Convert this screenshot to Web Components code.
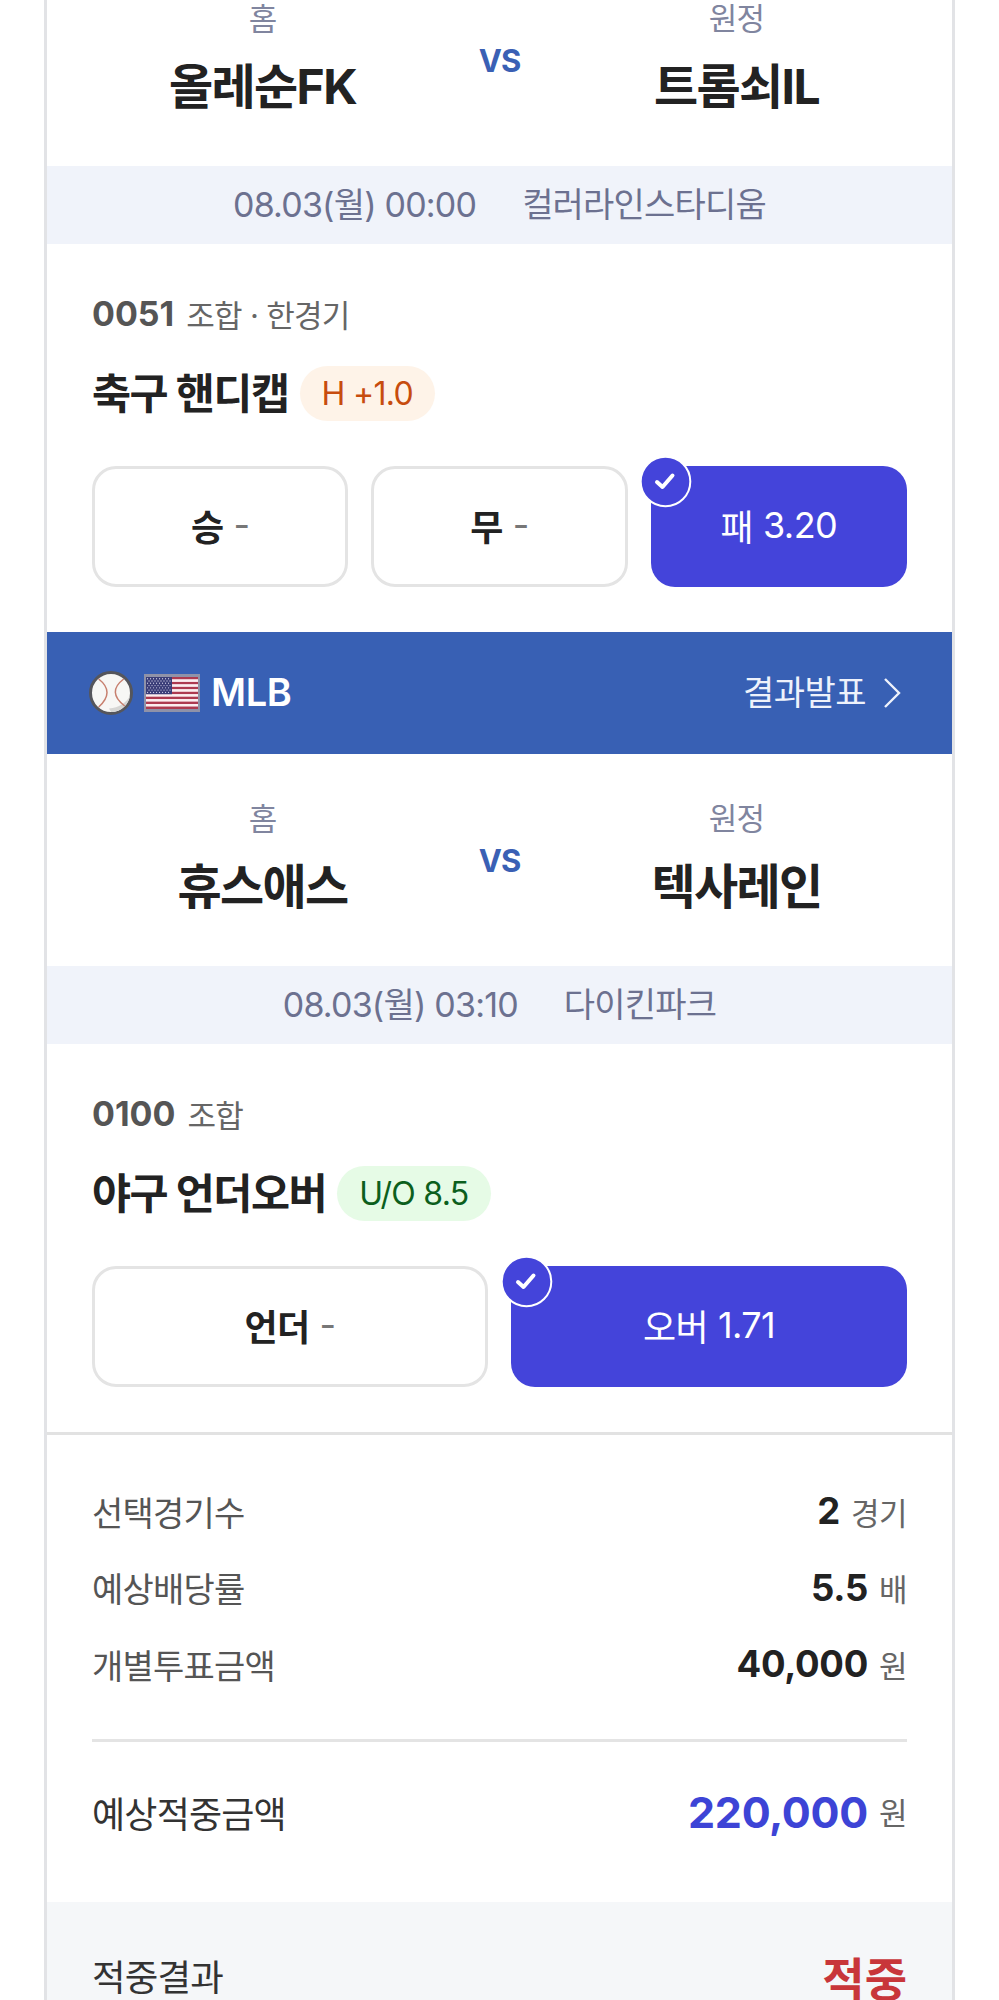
<!DOCTYPE html>
<html lang="ko"><head><meta charset="utf-8"><title>투표 내역</title>
<style>
html,body{margin:0;padding:0;background:#fff;}
body{font-family:Inter,"Noto Sans CJK KR",sans-serif;color:#222;height:2000px;overflow:hidden;}
</style></head><body>
<bet-card>
  <match-up home="올레순FK" away="트롬쇠IL"></match-up>
  <info-band time="08.03(월) 00:00" place="컬러라인스타디움"></info-band>
  <bet-market code="0051" kind="조합 · 한경기" title="축구 핸디캡" tag="H +1.0" tone="orange">
    <bet-option label="승"></bet-option>
    <bet-option label="무"></bet-option>
    <bet-option label="패" odds="3.20" selected></bet-option>
  </bet-market>
  <league-bar name="MLB" action="결과발표"></league-bar>
  <match-up home="휴스애스" away="텍사레인"></match-up>
  <info-band time="08.03(월) 03:10" place="다이킨파크"></info-band>
  <bet-market code="0100" kind="조합" title="야구 언더오버" tag="U/O 8.5" tone="green">
    <bet-option label="언더"></bet-option>
    <bet-option label="오버" odds="1.71" selected></bet-option>
  </bet-market>
  <bet-summary>
    <summary-row label="선택경기수" value="2" unit="경기"></summary-row>
    <summary-row label="예상배당률" value="5.5" unit="배"></summary-row>
    <summary-row label="개별투표금액" value="40,000" unit="원"></summary-row>
    <summary-row slot="total" total label="예상적중금액" value="220,000" unit="원"></summary-row>
  </bet-summary>
  <bet-result label="적중결과" value="적중"></bet-result>
</bet-card>
<script>
const FONT='Inter,"Noto Sans CJK KR",sans-serif';
function def(name,render){
  customElements.define(name,class extends HTMLElement{
    connectedCallback(){
      if(this.shadowRoot)return;
      const s=this.attachShadow({mode:'open'});
      s.innerHTML=render(this);
    }
  });
}
def('bet-card',()=>`<style>:host{display:block;box-sizing:border-box;width:911px;margin:-46px 0 0 44px;border-left:3px solid #e2e3e6;border-right:3px solid #e2e3e6;background:#fff;font-family:${FONT};}</style><slot></slot>`);
def('match-up',e=>`<style>
:host{display:grid;grid-template-columns:1fr auto 1fr;height:212px;box-sizing:border-box;padding-top:46px;text-align:center;}
.s{display:block;font-size:31px;line-height:38px;color:#80859f;letter-spacing:-.8px;font-weight:400;}
.n{display:block;margin-top:19px;font-size:48px;line-height:60px;font-weight:700;color:#222;letter-spacing:-1.6px;}
.v{font-size:31px;line-height:38px;font-weight:700;color:#3a60b4;margin-top:42px;letter-spacing:-1px;width:43px;}
</style><div><span class="s">홈</span><span class="n">${e.getAttribute('home')}</span></div><div class="v">VS</div><div><span class="s">원정</span><span class="n">${e.getAttribute('away')}</span></div>`);
def('info-band',e=>`<style>
:host{display:flex;justify-content:center;align-items:center;gap:46px;box-sizing:border-box;padding-bottom:5px;height:78px;background:#f0f3fa;color:#6c7190;font-size:34px;letter-spacing:-.8px;}
</style><span>${e.getAttribute('time')}</span><span>${e.getAttribute('place')}</span>`);
def('bet-market',e=>`<style>
:host{display:block;padding:49px 45px 45px;}
.m{display:flex;align-items:center;height:40px;gap:12px;font-size:31px;color:#666;letter-spacing:-.7px;}
.m b{font-size:34px;font-weight:700;color:#555;letter-spacing:0;}
.t{display:flex;align-items:center;gap:11px;margin-top:32px;height:56px;font-size:42.5px;font-weight:700;color:#222;letter-spacing:-1.5px;}
.t>span:first-child{margin-bottom:6px;}
.p{display:inline-flex;align-items:center;height:55px;padding:0 22px;border-radius:28px;font-size:32px;font-weight:400;letter-spacing:-.7px;}
.orange{background:#fef3e8;color:#c74c0e;}
.green{background:#e6fbe6;color:#0c5f1d;}
.o{display:flex;gap:23px;margin-top:45px;}
::slotted(bet-option){flex:1 1 0;}
</style><div class="m"><b>${e.getAttribute('code')}</b><span>${e.getAttribute('kind')}</span></div>
<div class="t"><span>${e.getAttribute('title')}</span><span class="p ${e.getAttribute('tone')}">${e.getAttribute('tag')}</span></div>
<div class="o"><slot></slot></div>`);
def('bet-option',e=>{
  const sel=e.hasAttribute('selected');
  return `<style>
:host{display:block;position:relative;min-width:0;}
.b{box-sizing:border-box;height:121px;padding-bottom:3px;border-radius:24px;display:flex;align-items:center;justify-content:center;gap:10px;font-size:36px;letter-spacing:-.6px;}
.off{border:3px solid #e4e4e4;background:#fff;color:#222;font-weight:700;}
.off i{font-style:normal;font-weight:400;color:#777;}
.on{background:#4444da;color:#fff;font-weight:400;}
.c{position:absolute;left:-11.500px;top:-11.500px;width:53px;height:53px;}
</style>${sel?`<div class="b on"><span>${e.getAttribute('label')}</span><span>${e.getAttribute('odds')}</span></div><svg class="c" viewBox="0 0 53 53"><circle cx="26.500" cy="26.500" r="24.800" fill="#4444da" stroke="#fff" stroke-width="2"/><path d="M18 27l5.500 5L33.500 20.500" fill="none" stroke="#fff" stroke-width="4" stroke-linecap="round" stroke-linejoin="round"/></svg>`:`<div class="b off"><span>${e.getAttribute('label')}</span><i>-</i></div>`}`;
});
def('league-bar',e=>{
  let stripes='';
  for(let i=0;i<13;i++){stripes+=`<rect x="0" y="${i*2}" width="52" height="2" fill="${i%2?'#fbeef0':'#ad3a50'}"/>`;}
  let stars='';
  for(let y=0;y<7;y++)for(let x=0;x<8;x++){stars+=`<circle cx="${1.6+x*3+(y%2?1.4:0)}" cy="${1.4+y*1.85}" r=".55" fill="#d8d8ec"/>`;}
  return `<style>
:host{display:flex;align-items:center;height:122px;padding:0 45px 0 42px;background:#3860b4;color:#fff;}
.ball{width:44px;height:44px;flex:none;}
.flag{width:56px;height:38px;flex:none;margin-left:11px;}
.n{margin-left:11px;padding-bottom:2px;font-size:38px;font-weight:600;letter-spacing:-.4px;}
.a{margin-left:auto;padding-bottom:5px;font-size:34px;letter-spacing:-.5px;color:#eef2fb;}
.ch{width:18px;height:32px;margin-left:17px;margin-right:6px;flex:none;}
</style>
<svg class="ball" viewBox="0 0 44 44"><circle cx="22" cy="22" r="20.500" fill="#f7f7f5" stroke="#55565c" stroke-width="3"/><path d="M22 41a19 19 0 0 0 19-16C37 32 30 36.500 20 37.600z" fill="#d6d6d4"/><path d="M9.700 8Q26.300 21 9.700 36" fill="none" stroke="#c77f6e" stroke-width="1.500"/><path d="M34.700 8Q17.500 21 35.700 35" fill="none" stroke="#c77f6e" stroke-width="1.500"/></svg>
<svg class="flag" viewBox="0 0 56 38"><rect width="56" height="38" fill="#8f92a8"/><g transform="translate(2 3) scale(1 1.231)"><rect width="52" height="26" fill="#fbeef0"/>${stripes}<rect width="26" height="14" fill="#3a3d78"/>${stars}</g></svg>
<span class="n">${e.getAttribute('name')}</span><span class="a">${e.getAttribute('action')}</span>
<svg class="ch" viewBox="0 0 18 32"><path d="M2 2l14 14L2 30" fill="none" stroke="#eef2fb" stroke-width="2.400"/></svg>`;
});
def('bet-summary',()=>`<style>
:host{display:block;border-top:3px solid #e2e2e2;padding:38px 45px 52px;}
.d{height:3px;background:#e4e4e4;margin:36px 0 32px;}
</style><slot></slot><div class="d"></div><slot name="total"></slot>`);
def('summary-row',e=>{
  const t=e.hasAttribute('total');
  return `<style>
:host{display:flex;align-items:center;justify-content:space-between;height:76.500px;}
.l{font-size:${t?36:34}px;color:${t?'#333':'#555'};letter-spacing:-.8px;}
.v{display:flex;align-items:center;gap:11px;}
b{font-size:${t?43:36.500}px;font-weight:700;color:${t?'#3d44d6':'#222'};letter-spacing:-.3px;}
i{font-style:normal;font-size:31px;color:#666;letter-spacing:-.5px;}
</style><span class="l">${e.getAttribute('label')}</span><span class="v"><b>${e.getAttribute('value')}</b><i>${e.getAttribute('unit')}</i></span>`;
});
def('bet-result',e=>`<style>
:host{display:flex;align-items:center;justify-content:space-between;box-sizing:border-box;height:156px;padding:0 45px 9px;background:#f5f7f9;}
span{font-size:36.500px;color:#333;letter-spacing:-.8px;}
b{font-size:46px;font-weight:700;color:#c8363a;}
</style><span>${e.getAttribute('label')}</span><b>${e.getAttribute('value')}</b>`);
</script>
</body></html>
